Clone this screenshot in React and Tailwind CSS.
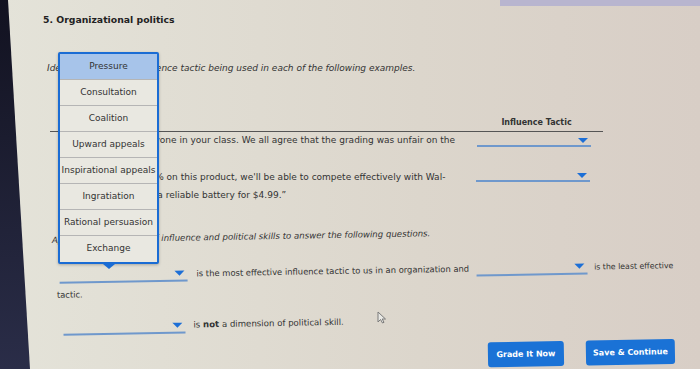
import React from 'react'

const tactics = [
  'Pressure',
  'Consultation',
  'Coalition',
  'Upward appeals',
  'Inspirational appeals',
  'Ingratiation',
  'Rational persuasion',
  'Exchange',
]

const Arrow = () => (
  <span className="w-0 h-0 border-x-[5px] border-x-transparent border-t-[5px] border-t-[#1d6fd6]" />
)

// underlined select with the little blue caret on the right
const Select = ({ className = '' }) => (
  <span className={`inline-flex shrink-0 items-start justify-end border-b-2 border-[#6f98cc] pr-[3px] pt-[3px] ${className}`}>
    <Arrow />
  </span>
)

const TacticList = () => (
  <div className="absolute left-[58px] top-[52px] w-[101px] rounded-[2px] border-2 border-[#1a6cd4] bg-[#e9e8e1] shadow-[0_1px_3px_rgba(0,0,0,0.25)]">
    {tactics.map((t, i) => (
      <div
        key={t}
        className={`flex h-[26px] items-center justify-center whitespace-nowrap text-[9px] text-[#333] ${i === 0 ? 'bg-[#a7c4ea]' : ''} ${i < tactics.length - 1 ? 'border-b border-[#b5b5b5]' : ''}`}
      >
        {t}
      </div>
    ))}
    <span className="absolute -bottom-[7px] left-1/2 -translate-x-1/2 w-0 h-0 border-x-[6px] border-x-transparent border-t-[5px] border-t-[#1a6cd4]" />
  </div>
)

const Cursor = () => (
  <svg className="absolute left-[377px] top-[311px]" width="10" height="13" viewBox="0 0 10 13">
    <path d="M1 1 L1 11 L3.5 8.5 L5.5 12 L7 11.3 L5.2 8 L8.5 8 Z" fill="#e8e8e4" stroke="#7a7a7a" strokeWidth="1" strokeLinejoin="round" />
  </svg>
)

export default function App() {
  return (
    <div className="relative w-[700px] h-[369px] overflow-hidden bg-[linear-gradient(to_bottom,#121220,#2a2d48)] font-['DejaVu_Sans',Verdana,sans-serif] text-[#333]">
      <div className="h-full bg-[linear-gradient(to_right,#e4e3d9,#dcd6cc_60%,#d8cec6)] pl-[47px] pt-[14px] [clip-path:polygon(8px_0,100%_0,100%_100%,30px_100%)]">
        <div className="absolute top-0 right-0 w-[200px] h-[6px] bg-[#b8b5cf]" />

        <h1 className="-ml-[4px] text-[9.3px] font-bold leading-[12px] text-[#222]">5. Organizational politics</h1>

        <p className="mt-[37px] whitespace-nowrap text-[9px] italic leading-[11px]">
          Identify the type of influence tactic being used in each of the following examples.
        </p>

        {/* examples table */}
        <div className="mt-[43px] ml-[3px] w-[553px]">
          <div className="flex border-b border-[#555] pb-[3px]">
            <div className="w-[420px]" />
            <div className="flex-1 text-center text-[8px] font-bold leading-[11px]">Influence Tactic</div>
          </div>
          <div className="flex h-[33px] pt-[3px]">
            <div className="w-[420px] whitespace-nowrap pl-[20px] text-[9px] leading-[11px]">
              “Speaking for everyone in your class. We all agree that the grading was unfair on the
            </div>
            <div className="flex flex-1 items-start pl-[7px]">
              <Select className="w-[114px] h-[12px]" />
            </div>
          </div>
          <div className="flex h-[40px] pt-[3px]">
            <div className="w-[420px] whitespace-nowrap pl-[20px] text-[9px] leading-[18px]">
              “If you can give 20% on this product, we'll be able to compete effectively with Wal-
              <br />
              Mart, and provides a reliable battery for $4.99.”
            </div>
            <div className="flex flex-1 items-start pl-[6px] pt-[2px]">
              <Select className="w-[114px] h-[12px]" />
            </div>
          </div>
        </div>

        {/* questions */}
        <div className="mt-[29.5px] origin-left -rotate-1">
          <p className="ml-[6px] whitespace-nowrap text-[8.6px] italic leading-[11px]">
            Apply your knowledge of influence and political skills to answer the following questions.
          </p>

          <div className="mt-[23.5px] flex items-end whitespace-nowrap text-[8.4px] leading-[11px]">
            <Select className="ml-[13px] w-[128px] h-[14px]" />
            <span className="ml-[9px] mb-[2px]">is the most effective influence tactic to us in an organization and</span>
            <Select className="ml-[7px] w-[111px] h-[14px]" />
            <span className="ml-[7px] mb-[2px] text-[7.8px]">is the least effective</span>
          </div>
          <p className="mt-[6.5px] ml-[10px] text-[8.4px] leading-[11px]">tactic.</p>

          <div className="mt-[20.5px] flex items-end whitespace-nowrap text-[8.6px] leading-[11px]">
            <Select className="ml-[16px] w-[122px] h-[14px]" />
            <span className="ml-[8px] mb-[3px]">
              is <b>not</b> a dimension of political skill.
            </span>
          </div>

          <div className="mt-[14.5px] flex justify-end gap-[22px] pr-[26px]">
            <button className="h-[25px] w-[76px] rounded-[3px] bg-[#1a72d6] text-[8px] font-bold text-white">Grade It Now</button>
            <button className="h-[25px] w-[89px] rounded-[3px] bg-[#1a72d6] text-[8px] font-bold text-white">Save &amp; Continue</button>
          </div>
        </div>

        <TacticList />
        <Cursor />
      </div>
    </div>
  )
}
